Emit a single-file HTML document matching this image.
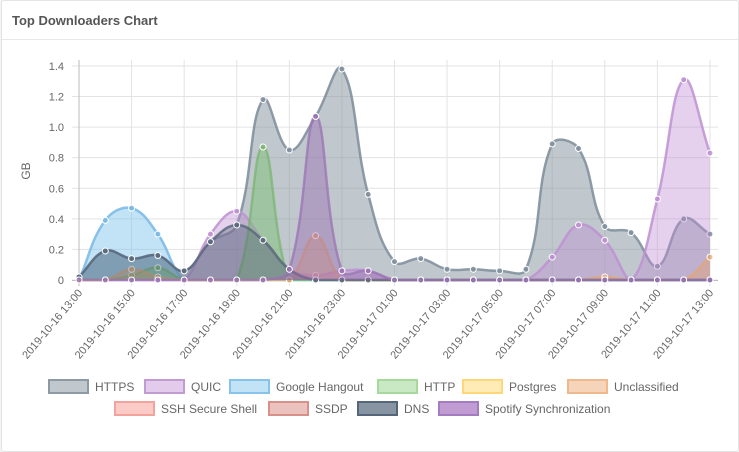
<!DOCTYPE html>
<html><head><meta charset="utf-8"><style>
body{margin:0;background:#f4f4f4;font-family:"Liberation Sans",sans-serif}
.card{position:absolute;left:1px;top:0;width:736px;height:450px;background:#fff;border:1px solid #e4e4e4;border-radius:3px}
.hd{height:38px;border-bottom:1px solid #e8e8e8;font-size:13px;font-weight:bold;color:#555;line-height:40px;padding-left:10px}
svg{position:absolute;left:0;top:0}
</style></head><body>
<div class="card"><div class="hd">Top Downloaders Chart</div></div>
<svg id="s" width="739" height="452" font-family="Liberation Sans, sans-serif"></svg>
<script>
const s=document.getElementById('s');let h='';
const X0=79,DX=26.29,Y0=280,SY=152.9;
const X=i=>X0+i*DX,Y=v=>Y0-v*SY;
for(let k=0;k<=7;k++){const y=Y(k*0.2);h+=`<line x1="72" x2="718" y1="${y}" y2="${y}" stroke="#e3e3e3"/>`;
h+=`<text x="64" y="${y+4}" font-size="11" fill="#666" text-anchor="end">${k==0?'0':(k*0.2).toFixed(1)}</text>`;}
const labs=['2019-10-16 13:00','2019-10-16 15:00','2019-10-16 17:00','2019-10-16 19:00','2019-10-16 21:00','2019-10-16 23:00','2019-10-17 01:00','2019-10-17 03:00','2019-10-17 05:00','2019-10-17 07:00','2019-10-17 09:00','2019-10-17 11:00','2019-10-17 13:00'];
for(let k=0;k<13;k++){const x=X(k*2);h+=`<line x1="${x}" x2="${x}" y1="60" y2="286" stroke="${k==0?'#bbb':'#e3e3e3'}"/>`;
h+=`<text transform="translate(${x+4},${293}) rotate(-50)" font-size="11" fill="#666" text-anchor="end">${labs[k]}</text>`;}
h+=`<line x1="72" x2="718" y1="280.5" y2="280.5" stroke="#bbb"/>`;
h+=`<text transform="translate(30,171) rotate(-90)" font-size="12" fill="#666" text-anchor="middle">GB</text>`;
function arr(m){const a=Array(25).fill(0);for(const k in m)a[k]=m[k];return a;}
const ds=[
['HTTPS','rgba(130,145,155,0.5)','rgba(130,145,158,0.9)',[0.02,0.19,0.14,0.16,0.06,0.25,0.36,1.18,0.85,1.07,1.38,0.56,0.12,0.14,0.07,0.07,0.06,0.07,0.89,0.86,0.35,0.31,0.09,0.40,0.30]],
['Google Hangout','rgba(120,190,235,0.45)','rgba(120,185,230,0.85)',arr({1:0.39,2:0.47,3:0.30})],
['QUIC','rgba(190,140,210,0.4)','rgba(190,145,210,0.85)',arr({5:0.30,6:0.45,7:0.26,8:0.07,9:0.03,10:0.06,11:0.06,18:0.15,19:0.36,20:0.26,22:0.53,23:1.31,24:0.83})],
['HTTP','rgba(120,190,110,0.45)','rgba(120,180,110,0.7)',arr({2:0.03,3:0.08,7:0.87})],
['Unclassified','rgba(235,160,100,0.4)','rgba(230,165,110,0.7)',arr({2:0.07,3:0.02,9:0.29,20:0.02,24:0.15})],
['DNS','rgba(70,90,110,0.35)','rgba(90,105,125,0.85)',arr({0:0.02,1:0.19,2:0.14,3:0.16,4:0.06,5:0.25,6:0.36,7:0.26,8:0.07})],
['Spotify','rgba(150,100,175,0.4)','rgba(155,115,180,0.75)',arr({8:0.07,9:1.07,10:0.06,11:0.06})]
];
function path(v){const p=v.map((y,i)=>[X(i),Y(y)]);let d=`M${p[0][0]},${p[0][1]}`;const t=0.4;
const cp=p.map((c,i)=>{const a=p[Math.max(0,i-1)],b=p[Math.min(p.length-1,i+1)];
const d01=Math.hypot(c[0]-a[0],c[1]-a[1]),d12=Math.hypot(b[0]-c[0],b[1]-c[1]);const s01=d01/(d01+d12||1),s12=d12/(d01+d12||1);
const fa=t*s01,fb=t*s12;return[[c[0]-fa*(b[0]-a[0]),Math.min(Y0,c[1]-fa*(b[1]-a[1]))],[c[0]+fb*(b[0]-a[0]),Math.min(Y0,c[1]+fb*(b[1]-a[1]))]];});
for(let i=1;i<p.length;i++)d+=` C${cp[i-1][1][0]},${cp[i-1][1][1]} ${cp[i][0][0]},${cp[i][0][1]} ${p[i][0]},${p[i][1]}`;return d;}
for(const [n,f,c,v] of ds){const d=path(v);h+=`<path d="${d} L${X(24)},${Y0} L${X0},${Y0}Z" fill="${f}"/><path d="${d}" fill="none" stroke="${c}" stroke-width="2.5"/>`;
v.forEach((y,i)=>{h+=`<circle cx="${X(i)}" cy="${Y(y)}" r="3" fill="${c}" stroke="#fff" stroke-width="1"/>`;});}
const lg=[[48,386,'HTTPS','rgba(130,145,155,0.5)','#8d99a3'],[144,386,'QUIC','rgba(190,140,210,0.45)','#c39bd3'],[229,386,'Google Hangout','rgba(120,190,235,0.45)','#86c2ea'],[377,386,'HTTP','rgba(120,200,110,0.4)','#a8d99c'],[462,386,'Postgres','rgba(255,215,110,0.5)','#ffd77a'],[567,386,'Unclassified','rgba(235,160,100,0.45)','#eeb98e'],
[114,408,'SSH Secure Shell','rgba(245,140,130,0.45)','#f3a39b'],[268,408,'SSDP','rgba(210,120,110,0.45)','#d99089'],[357,408,'DNS','rgba(70,90,110,0.65)','#55657a'],[438,408,'Spotify Synchronization','rgba(150,90,180,0.6)','#a47dc0']];
for(const [x,y,t,f,c] of lg){h+=`<rect x="${x+1}" y="${y-6}" width="39" height="13" fill="${f}" stroke="${c}" stroke-width="2"/><text x="${x+47}" y="${y+5}" font-size="12" fill="#666">${t}</text>`;}
s.innerHTML=h;
</script>
</body></html>
